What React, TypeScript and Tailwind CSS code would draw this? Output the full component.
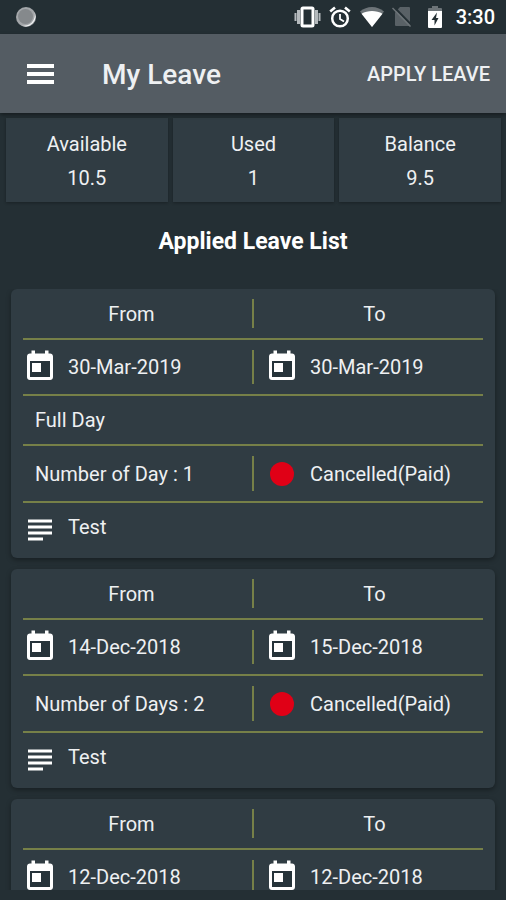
import React from "react";
import { MdSubject } from "react-icons/md";

type Leave = {
  from: string;
  to: string;
  dayType?: string;
  count?: string;
  status?: string;
  remark?: string;
};

const balances = [
  { label: "Available", value: "10.5" },
  { label: "Used", value: "1" },
  { label: "Balance", value: "9.5" },
];

const leaves: Leave[] = [
  {
    from: "30-Mar-2019",
    to: "30-Mar-2019",
    dayType: "Full Day",
    count: "Number of Day : 1",
    status: "Cancelled(Paid)",
    remark: "Test",
  },
  {
    from: "14-Dec-2018",
    to: "15-Dec-2018",
    count: "Number of Days : 2",
    status: "Cancelled(Paid)",
    remark: "Test",
  },
  {
    from: "12-Dec-2018",
    to: "12-Dec-2018",
  },
];

function StatusBar() {
  return (
    <div className="flex h-[34px] shrink-0 items-center justify-between pl-4 pr-[11px]">
      <svg width="20" height="20" viewBox="0 0 20 20">
        <circle cx="10" cy="10" r="10" fill="#a4a7aa" />
        <path d="M18.5 5a10 10 0 0 1-13 13.5A11 11 0 0 0 18.5 5z" fill="#f1f3f4" />
        <circle cx="9.5" cy="9.5" r="7.5" fill="#85898c" />
      </svg>
      <div className="flex items-center text-white">
        <svg width="27" height="22" viewBox="0 0 27 22">
          <path d="M0.500 7h2v8h-2zM3 4h3v14H3zM21 4h3v14h-3zM24.500 7h2v8h-2z" fill="#b4b9bc" />
          <rect x="8" y="2" width="11" height="18" rx="1" fill="none" stroke="#fff" strokeWidth="3" />
        </svg>
        <svg width="22" height="22" viewBox="0 0 22 22" fill="none" stroke="#fff" className="ml-2 mr-px">
          <circle cx="11" cy="12.500" r="7.800" strokeWidth="2.500" />
          <path d="M1.200 5.500 6 1.500M20.800 5.500 16 1.500" strokeWidth="2.600" />
          <path d="M11 8v5l4 2.500" strokeWidth="1.800" />
        </svg>
        <svg width="24" height="20" viewBox="0 0 24 20" className="ml-2">
          <path d="M12 20 0 4.500C3.500 1.600 7.600 0 12 0s8.500 1.600 12 4.500z" fill="#6d7478" />
          <path d="M12 20 1.500 6.700C4.500 4.900 8.300 4 12 4s7.500.9 10.500 2.700z" fill="#fff" />
        </svg>
        <svg width="20" height="20" viewBox="0 0 20 20" className="ml-2">
          <path d="M3 5.500 8 0h9q1 0 1 1v17q0 1-1 1H4q-1 0-1-1z" fill="#596166" />
          <path d="M2 0 20 18.500" stroke="#242f34" strokeWidth="2" />
          <path d="M0.500 1 18.500 19.500" stroke="#6d7478" strokeWidth="1.500" />
        </svg>
        <svg width="14" height="22" viewBox="0 0 14 22" className="ml-4">
          <path d="M4 0h6v2h3q1 0 1 1v2H0V3q0-1 1-1h3z" fill="#6d7478" />
          <path d="M0 5h14v16q0 1-1 1H1q-1 0-1-1z" fill="#fff" />
          <path d="M9 6.500 3.500 14h3v5.500L10.500 12H8z" fill="#242f34" />
        </svg>
        <span className="ml-[14px] text-xl font-medium">3:30</span>
      </div>
    </div>
  );
}

function Header() {
  return (
    <header className="z-10 flex h-[79px] shrink-0 items-center bg-[#545c63] pl-[27px] pr-4 shadow-[0_2px_4px_rgba(0,0,0,0.4)]">
      <button aria-label="Menu">
        <svg width="27" height="20" viewBox="0 0 27 20" fill="#fff">
          <rect width="27" height="4" />
          <rect y="8" width="27" height="4" />
          <rect y="16" width="27" height="4" />
        </svg>
      </button>
      <h1 className="ml-12 flex-1 pt-0.5 text-[28px] font-medium">My Leave</h1>
      <button className="text-xl font-medium">APPLY LEAVE</button>
    </header>
  );
}

function Line() {
  return <div className="mx-3 h-0.5 bg-[#768048]" />;
}

function Split({ left, right }: { left: React.ReactNode; right: React.ReactNode }) {
  return (
    <div className="flex h-full items-center">
      <div className="flex-1">{left}</div>
      <div className="my-2.5 w-0.5 self-stretch bg-[#768048]" />
      <div className="flex-1">{right}</div>
    </div>
  );
}

function CalendarIcon() {
  return (
    <svg width="36" height="36" viewBox="0 0 36 36">
      <path d="M8 11h20v17H8z" fill="#26333a" />
      <path
        d="M28 4.500h-1.500v-3h-3.500v3H13v-3H9.500v3H8c-1.700 0-3 1.300-3 3V28c0 1.700 1.300 3 3 3h20c1.700 0 3-1.300 3-3V7.500c0-1.700-1.300-3-3-3zM28 28H8V12h20z"
        fill="#fff"
      />
      <path d="M10 14h9v9h-9z" fill="#fff" />
    </svg>
  );
}

function DateCell({ date }: { date: string }) {
  return (
    <div className="flex items-center gap-2.5">
      <CalendarIcon />
      <span>{date}</span>
    </div>
  );
}

function LeaveCard({ leave }: { leave: Leave }) {
  return (
    <article className="shrink-0 rounded-md bg-[#303c43] shadow-[0_2px_5px_rgba(0,0,0,0.35)]">
      <div className="h-[49px] text-center">
        <Split left="From" right="To" />
      </div>
      <Line />
      <div className="h-[54px]">
        <Split
          left={
            <div className="pl-[11px]">
              <DateCell date={leave.from} />
            </div>
          }
          right={
            <div className="pl-2.5">
              <DateCell date={leave.to} />
            </div>
          }
        />
      </div>
      {leave.dayType && (
        <>
          <Line />
          <div className="flex h-12 items-center pl-6">{leave.dayType}</div>
        </>
      )}
      {leave.count && (
        <>
          <Line />
          <div className="h-[55px]">
            <Split
              left={<div className="pl-6">{leave.count}</div>}
              right={
                <div className="flex items-center gap-2.5 pl-2.5">
                  <div className="flex size-9 items-center justify-center">
                    <div className="size-6 rounded-full bg-[#e00016]" />
                  </div>
                  <span>{leave.status}</span>
                </div>
              }
            />
          </div>
        </>
      )}
      {leave.remark && (
        <>
          <Line />
          <div className="flex h-[55px] items-start gap-2.5 pl-[11px] pt-[9px]">
            <MdSubject size={36} className="text-white" />
            <span className="leading-[30px]">{leave.remark}</span>
          </div>
        </>
      )}
    </article>
  );
}

export default function App() {
  return (
    <div className="flex h-dvh flex-col bg-[#242f34] pb-2.5 font-[Roboto,sans-serif] text-xl text-[#eef0f2]">
      <StatusBar />
      <Header />
      <section className="mt-[5px] grid shrink-0 grid-cols-3 gap-[5px] pl-1.5 pr-[5px]">
        {balances.map((item) => (
          <div
            key={item.label}
            className="bg-[#303c43] pt-[9px] pb-[7px] text-center leading-[34px] shadow-[0_1px_3px_rgba(0,0,0,0.3)]"
          >
            <div>{item.label}</div>
            <div>{item.value}</div>
          </div>
        ))}
      </section>
      <h2 className="mt-[25px] shrink-0 text-center text-[23px] leading-[30px] font-bold text-white">
        Applied Leave List
      </h2>
      <main className="mt-8 flex min-h-0 flex-1 flex-col gap-[11px] overflow-y-auto px-[11px] [scrollbar-width:none]">
        {leaves.map((leave) => (
          <LeaveCard key={leave.from} leave={leave} />
        ))}
      </main>
    </div>
  );
}
